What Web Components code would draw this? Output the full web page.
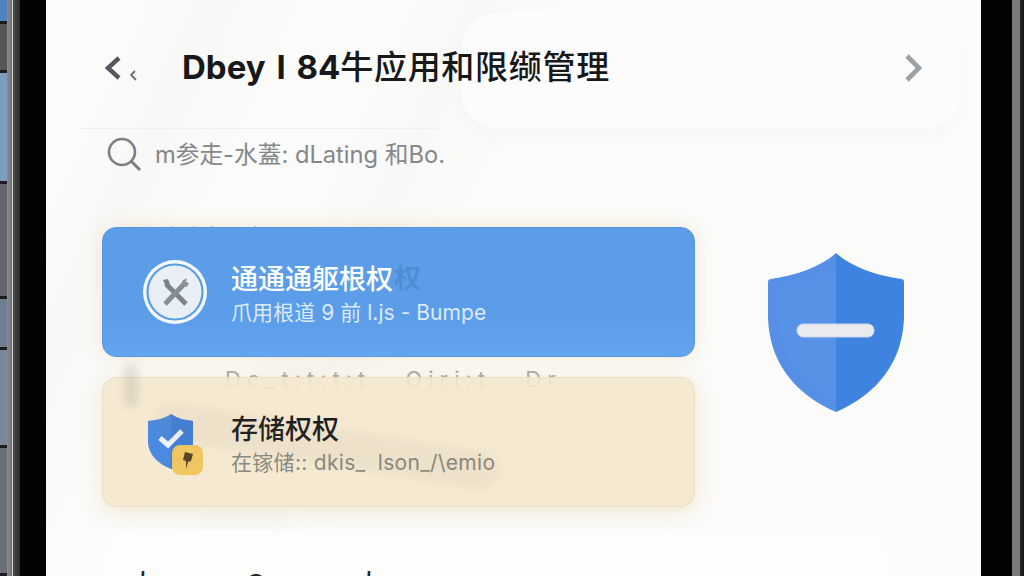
<!DOCTYPE html>
<html lang="zh">
<head>
<meta charset="utf-8">
<title>权限管理</title>
<style>
    html, body { margin: 0; padding: 0; background: #000; }
    body { width: 1024px; height: 576px; overflow: hidden; font-family: "Inter", "Noto Sans CJK SC", sans-serif; }
</style>
</head>
<body>
<phone-frame>
    <top-bar></top-bar>
    <search-row>m参走-水蓋: dLating 和Bo.</search-row>
    <perm-section>
        <perm-card slot="cards" tone="blue">
            <tool-icon slot="icon"></tool-icon>
            <span slot="title">通通通躯根权</span>
            <span slot="sub">爪用根道 9 前 l.js - Bumpe</span>
        </perm-card>
        <perm-card slot="cards" tone="cream">
            <small-shield slot="icon"></small-shield>
            <span slot="title">存储权权</span>
            <span slot="sub">在镓储:: dkis_&nbsp; lson_/\emio</span>
        </perm-card>
        <big-shield slot="aside"></big-shield>
    </perm-section>
    <bottom-card><span>人</span><span>O</span><span>人</span></bottom-card>
</phone-frame>

<script>
customElements.define("phone-frame", class extends HTMLElement {
    connectedCallback() {
        this.attachShadow({mode: 'open'});
        this.shadowRoot.innerHTML = `
            <style>
                :host { display: flex; width: 1024px; height: 576px; background: #030303; }
                .left-edge { width: 20px; display: flex; flex: none; }
                .tiles { width: 7px; display: flex; flex-direction: column; gap: 3px; background: #1c1c1e; }
                .tiles i { display: block; }
                .rail { width: 13px; background: linear-gradient(90deg, #8b8d90 0, #6f7275 38%, #d8d8d6 40%, #c9c9c7 46%, #4a4846 50%, #2e2c2b 100%); }
                .bezel-l { width: 26px; flex: none; }
                .screen {
                    width: 935px; flex: none; height: 576px; position: relative; overflow: hidden;
                    display: flex; flex-direction: column;
                    background:
                        linear-gradient(115deg, transparent 8%, rgba(228,228,225,.16) 14%, transparent 22%, transparent 30%, rgba(228,228,225,.14) 36%, transparent 44%),
                        #fbfbfa;
                }
                .bezel-r { width: 31px; flex: none; }
                .right-edge { width: 12px; flex: none; background: linear-gradient(90deg, #74767a 0, #7c7e80 62%, #26262a 70%, #161618 100%); }
                .glass {
                    position: absolute; left: 415px; top: 12px; width: 499px; height: 116px;
                    border-radius: 36px; background: #fcfcfc;
                    box-shadow: 0 12px 12px rgba(232,232,230,.14);
                }
                ::slotted(*) { position: relative; }
            </style>
            <div class="left-edge">
                <div class="tiles">
                    <i style="height:21px;background:#4f83c0"></i>
                    <i style="height:46px;background:#55565a"></i>
                    <i style="height:108px;background:#7d9dbf"></i>
                    <i style="height:112px;background:#63676d"></i>
                    <i style="height:48px;background:#6e7f93"></i>
                    <i style="height:95px;background:#7c8797"></i>
                    <i style="height:125px;background:#6b7076"></i>
                </div>
                <div class="rail"></div>
            </div>
            <div class="bezel-l"></div>
            <div class="screen">
                <div class="glass"></div>
                <slot></slot>
            </div>
            <div class="bezel-r"></div>
            <div class="right-edge"></div>
        `;
    }
});

customElements.define("top-bar", class extends HTMLElement {
    connectedCallback() {
        this.attachShadow({mode: 'open'});
        this.shadowRoot.innerHTML = `
            <style>
                :host { display: block; height: 128px; padding: 0 58px 0 58px; box-sizing: border-box; }
                .bar { display: flex; align-items: center; height: 135px; }
                svg { display: block; flex: none; }
                h1 {
                    margin: -5px 0 0 44px; flex: 1; font-size: 33px; font-weight: 500; color: #17181a;
                    white-space: nowrap; letter-spacing: .7px;
                }
                h1 b { font-weight: 700; letter-spacing: 0; word-spacing: 3px; }
                .rule { position: absolute; left: 32px; top: 128px; width: 360px; height: 1px; background: #efefec; }
            </style>
            <div class="bar">
                <svg width="34" height="26" viewBox="0 0 34 26">
                    <path d="M15 3 L4 13 L15 23" fill="none" stroke="#55585c" stroke-width="4.4" stroke-linejoin="miter"/>
                    <path d="M31 16 L27 20 L32 25" fill="none" stroke="#6b6e72" stroke-width="1.8"/>
                </svg>
                <h1><b>Dbey I 84</b>牛应用和限缬管理</h1>
                <svg width="19" height="28" viewBox="0 0 19 28">
                    <path d="M3 2 L15 14 L3 26" fill="none" stroke="#9ba1a8" stroke-width="4.600"/>
                </svg>
            </div>
            <div class="rule"></div>
        `;
    }
});

customElements.define("search-row", class extends HTMLElement {
    connectedCallback() {
        this.attachShadow({mode: 'open'});
        this.shadowRoot.innerHTML = `
            <style>
                :host { display: block; height: 99px; padding: 9px 0 0 60px; box-sizing: border-box; }
                .row { display: flex; align-items: center; gap: 13px; height: 36px; }
                svg { flex: none; display: block; }
                span { font-size: 23.700px; color: #85878a; white-space: nowrap; margin-top: -4px; }
            </style>
            <div class="row">
                <svg width="36" height="36" viewBox="0 0 36 36">
                    <circle cx="16" cy="15" r="13" fill="none" stroke="#7d8084" stroke-width="2.600"/>
                    <path d="M25 24 L34 33" stroke="#7d8084" stroke-width="3" fill="none"/>
                </svg>
                <span><slot></slot></span>
            </div>
        `;
    }
});

customElements.define("perm-section", class extends HTMLElement {
    connectedCallback() {
        this.attachShadow({mode: 'open'});
        this.shadowRoot.innerHTML = `
            <style>
                :host { display: flex; height: 303px; padding-left: 56px; box-sizing: border-box; }
                .cards { position: relative; width: 593px; flex: none; display: flex; flex-direction: column; gap: 20px; }
                .aside { flex: 1; padding: 26px 0 0 73px; }
                ::slotted(perm-card) { position: relative; z-index: 1; }
                .ghost { position: absolute; white-space: nowrap; }
                .behind-a { left: 60px; top: -8px; font-size: 22px; color: #45474a; z-index: 0; }
                .behind-b, .over-b { left: 123px; top: 139px; font-size: 22px; color: #a5a39c; letter-spacing: 6px; word-spacing: 22px; }
                .behind-b { z-index: 0; }
                .over-b { opacity: .1; z-index: 2; }
                .over-a { left: 292px; top: 30px; font-size: 27px; font-weight: 700; color: #3c6ea8; opacity: .32; z-index: 2; }
                .smudge { position: absolute; left: 22px; top: 136px; width: 14px; height: 44px; border-radius: 8px; background: #85837c; opacity: .2; filter: blur(4px); z-index: 2; }
                .smear { position: absolute; left: 50px; top: 200px; width: 350px; height: 38px; border-radius: 20px; transform: rotate(9deg); background: #8a8070; opacity: .07; filter: blur(5px); z-index: 2; }
            </style>
            <div class="cards">
                <span class="ghost behind-a">存在权限根</span>
                <span class="ghost behind-b">Dc_t:t:t:t Oiri:t Dr</span>
                <slot name="cards"></slot>
                <span class="ghost over-a">权</span>
                <span class="ghost over-b">Dc_t:t:t:t Oiri:t Dr</span>
                <div class="smudge"></div>
                <div class="smear"></div>
            </div>
            <div class="aside"><slot name="aside"></slot></div>
        `;
    }
});

customElements.define("perm-card", class extends HTMLElement {
    connectedCallback() {
        this.attachShadow({mode: 'open'});
        this.shadowRoot.innerHTML = `
            <style>
                :host { display: block; height: 130px; }
                .card {
                    height: 100%; box-sizing: border-box; border-radius: 14px;
                    display: flex; align-items: center; padding-left: 39px;
                }
                :host([tone="blue"]) .card {
                    background: linear-gradient(180deg, #5b9de8 0, #5b9de8 70%, #62a5f1 100%);
                    border: 1px solid #5596e2;
                    box-shadow: 0 0 18px rgba(236,222,190,.65);
                    color: #fff;
                }
                :host([tone="cream"]) .card {
                    background: #f5e9d2;
                    border: 1px solid #ebdfc5;
                    box-shadow: 0 4px 22px rgba(236,222,185,.7);
                    color: #1b1c1e;
                }
                .icon { width: 66px; height: 66px; flex: none; display: flex; align-items: center; justify-content: center; }
                .text { margin-left: 23px; padding-top: 5px; display: flex; flex-direction: column; gap: 3px; white-space: nowrap; }
                .title { font-size: 27px; line-height: 34px; font-weight: 500; }
                .sub { font-size: 21px; line-height: 26px; letter-spacing: .3px; }
                :host([tone="blue"]) .sub { color: #dcebfd; letter-spacing: .05px; }
                :host([tone="cream"]) .sub { color: #8a8880; }
            </style>
            <div class="card">
                <div class="icon"><slot name="icon"></slot></div>
                <div class="text">
                    <div class="title"><slot name="title"></slot></div>
                    <div class="sub"><slot name="sub"></slot></div>
                </div>
            </div>
        `;
    }
});

customElements.define("tool-icon", class extends HTMLElement {
    connectedCallback() {
        this.attachShadow({mode: 'open'});
        this.shadowRoot.innerHTML = `
            <style>:host { display: block; width: 66px; height: 66px; } svg { display: block; }</style>
            <svg width="66" height="66" viewBox="0 0 66 66">
                <defs>
                    <linearGradient id="steel" x1="0" y1="0" x2="1" y2="1">
                        <stop offset="0" stop-color="#9aa2ab"/>
                        <stop offset="1" stop-color="#6f7780"/>
                    </linearGradient>
                </defs>
                <circle cx="33" cy="33" r="32" fill="#f4f8fc"/>
                <circle cx="33" cy="33" r="27.500" fill="#e9eff6" stroke="#5b9de0" stroke-width="2.200"/>
                <path d="M24 25 L44 45" stroke="#7b838c" stroke-width="5" fill="none"/>
                <path d="M43 24 L23 45" stroke="url(#steel)" stroke-width="5" fill="none"/>
                <path d="M21 21 L26 20 L28 25 L24 28 Z" fill="#7b838c"/>
                <path d="M40 22 L45 19 L44 23 L47 24 L45 28 L41 27 Z" fill="#8b939c"/>
                <path d="M46 20 L48 18" stroke="#fff" stroke-width="1.200"/>
            </svg>
        `;
    }
});

customElements.define("small-shield", class extends HTMLElement {
    connectedCallback() {
        this.attachShadow({mode: 'open'});
        this.shadowRoot.innerHTML = `
            <style>:host { display: block; width: 66px; height: 66px; } svg { display: block; }</style>
            <svg width="66" height="66" viewBox="0 0 66 66">
                <path d="M29 5 C35 9 41 11 51 12 L51 34 C50 47 41 55 29 60 C17 55 7 47 6 34 L6 12 C16 11 23 9 29 5 Z" fill="#4a8ae0"/>
                <path d="M29 5 C35 9 41 11 51 12 L51 34 C50 47 41 55 29 60 Z" fill="#3f7fd8"/>
                <path d="M18 29 L26 36 L40 22" fill="none" stroke="#eef4fb" stroke-width="5"/>
                <rect x="30" y="36" width="31" height="30" rx="8" fill="#efc65f"/>
                <path d="M43 43 L51 45 L49 52 L46 53 L44 60 L44 52 L41 51 Z" fill="#55462a"/>
            </svg>
        `;
    }
});

customElements.define("big-shield", class extends HTMLElement {
    connectedCallback() {
        this.attachShadow({mode: 'open'});
        this.shadowRoot.innerHTML = `
            <style>:host { display: block; width: 136px; height: 160px; } svg { display: block; }</style>
            <svg width="136" height="160" viewBox="0 0 136 160">
                <path d="M68 0 C54 13 30 22 3 26 C1 26 0 27 0 29 L0 64 C1 108 26 141 68 159 Z" fill="#5590e6"/>
                <path d="M68 0 C82 13 106 22 133 26 C135 26 136 27 136 29 L136 64 C135 108 110 141 68 159 Z" fill="#3f83e0"/>
                <path d="M10 34 C22 32 40 28 68 14 L68 148 C38 132 12 106 10 64 Z" fill="#5792e7"/>
                <rect x="29" y="71" width="77" height="13" rx="6" fill="#e9ebef" stroke="#c9d6ea" stroke-width="1"/>
            </svg>
        `;
    }
});

customElements.define("bottom-card", class extends HTMLElement {
    connectedCallback() {
        this.attachShadow({mode: 'open'});
        this.shadowRoot.innerHTML = `
            <style>
                :host {
                    display: flex; align-items: flex-start; gap: 83px;
                    margin: 0 0 0 56px; width: 788px; height: 46px; flex: none;
                    box-sizing: border-box; padding: 40px 0 0 26px; overflow: hidden;
                    background: #fdfdfc; border-radius: 30px 30px 0 0;
                    font-size: 30px; line-height: 30px; color: #26272a; white-space: nowrap;
                }
                ::slotted(span) { width: 30px; text-align: center; flex: none; }
            </style>
            <slot></slot>
        `;
    }
});
</script>
</body>
</html>
